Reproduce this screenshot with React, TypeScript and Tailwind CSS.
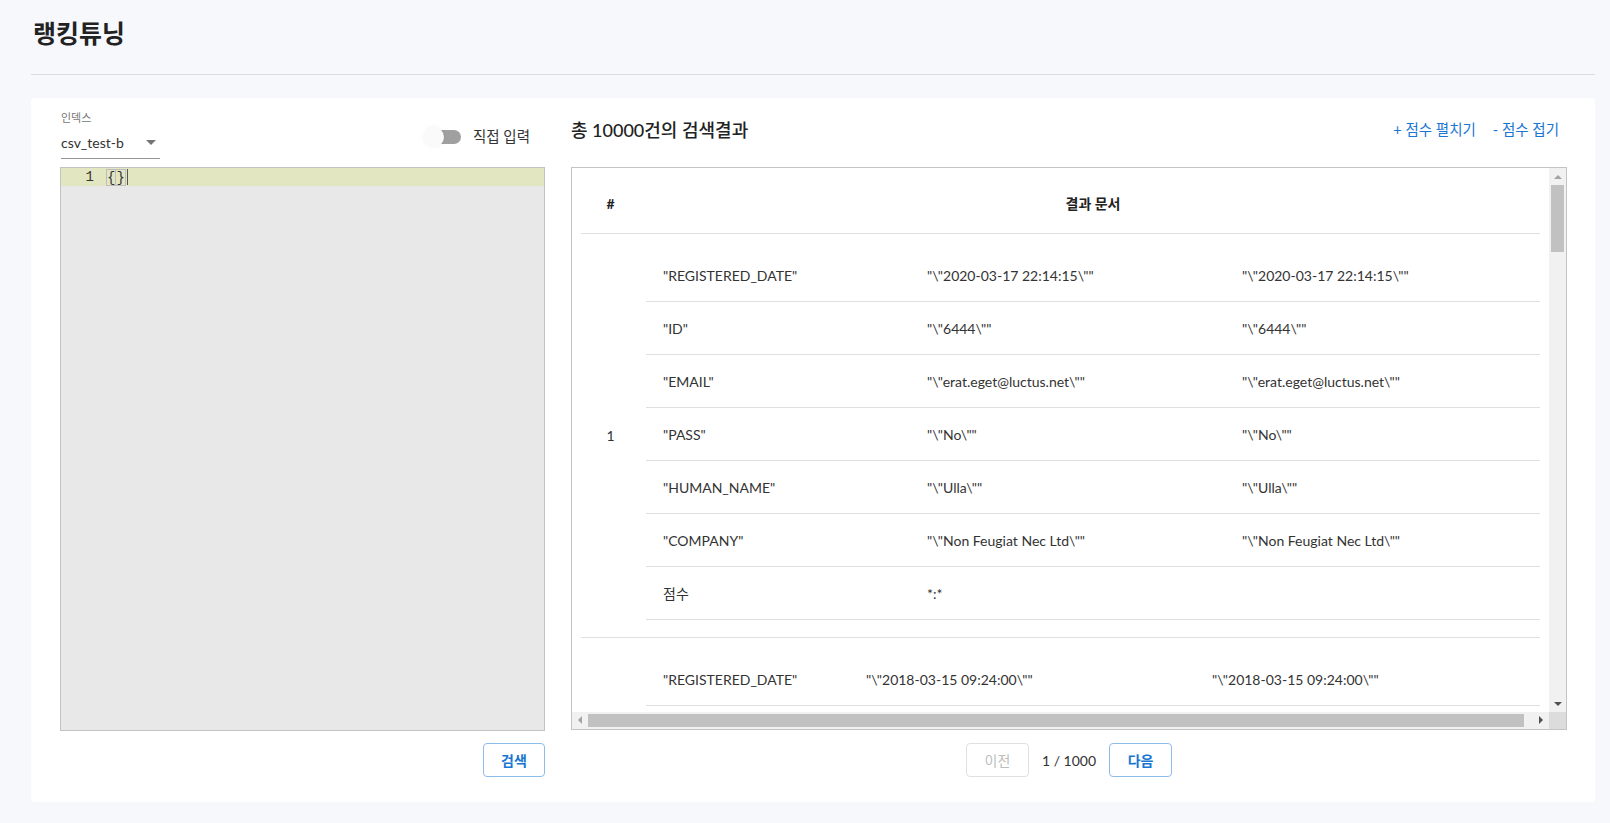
import React from 'react';

const FONT = { fontFamily: 'Lato, "Noto Sans CJK KR", sans-serif' };

type Row = [string, string, string];

const group1: Row[] = [
  ['"REGISTERED_DATE"', '"\\"2020-03-17 22:14:15\\""', '"\\"2020-03-17 22:14:15\\""'],
  ['"ID"', '"\\"6444\\""', '"\\"6444\\""'],
  ['"EMAIL"', '"\\"erat.eget@luctus.net\\""', '"\\"erat.eget@luctus.net\\""'],
  ['"PASS"', '"\\"No\\""', '"\\"No\\""'],
  ['"HUMAN_NAME"', '"\\"Ulla\\""', '"\\"Ulla\\""'],
  ['"COMPANY"', '"\\"Non Feugiat Nec Ltd\\""', '"\\"Non Feugiat Nec Ltd\\""'],
  ['점수', '*:*', ''],
];

// second hit, only its first row is in view
const group2: Row[] = [
  ['"REGISTERED_DATE"', '"\\"2018-03-15 09:24:00\\""', '"\\"2018-03-15 09:24:00\\""'],
];

function ResultGroup({ no, rows, cols }: { no: string; rows: Row[]; cols: [string, string, string] }) {
  return (
    <div className="flex border-b border-[#e0e0e0]">
      <div className="w-[65px] shrink-0 flex items-center justify-center pr-[6px] text-[14px] text-[#333]">{no}</div>
      <div className="flex-1 pt-[15px] pb-[17px]">
        {rows.map((r, i) => (
          <div key={i} className="flex h-[53px] items-center border-b border-[#e0e0e0] text-[14px] text-[#333]">
            <div className={`${cols[0]} pl-[17px] whitespace-nowrap`}>{r[0]}</div>
            <div className={`${cols[1]} pl-[17px] whitespace-nowrap`}>{r[1]}</div>
            <div className={`${cols[2]} pl-[17px] whitespace-nowrap`}>{r[2]}</div>
          </div>
        ))}
      </div>
    </div>
  );
}

function Tri({ dir, color }: { dir: 'up' | 'down' | 'left' | 'right'; color: string }) {
  const pts = {
    up: '0,7 4,3 8,7',
    down: '0,3 8,3 4,7',
    left: '6,0 6,8 2,4',
    right: '2,0 2,8 6,4',
  }[dir];
  return (
    <svg width="8" height="10" viewBox="0 0 8 10">
      <polygon points={pts} fill={color} />
    </svg>
  );
}

function PageButton({ label, disabled }: { label: string; disabled?: boolean }) {
  return (
    <button
      className={
        disabled
          ? 'h-[34px] w-[63px] rounded-[4px] border border-[#e0e0e0] text-[14px] text-[#bdbdbd]'
          : 'h-[34px] w-[63px] rounded-[4px] border border-[#8dbbea] text-[14px] font-bold text-[#1976d2]'
      }
    >
      {label}
    </button>
  );
}

export default function App() {
  return (
    <div className="min-h-screen bg-[#f7f8fc] pl-[31px] pr-[15px] pt-[19px] pb-[21px]" style={FONT}>
      <h1 className="h-[28px] leading-[28px] text-[25px] font-bold text-[#222] pl-[2px]">랭킹튜닝</h1>
      <div className="mt-[27px] border-t border-[#dcdde0]" />

      <div className="mt-[23px] h-[704px] rounded-[4px] bg-white pl-[29px] pr-[28px] pt-[12px] flex gap-[26px]">
        {/* left */}
        <div className="w-[485px] flex flex-col">
          <div className="flex items-start justify-between">
            <div className="pl-[1px]">
              <div className="h-[16px] leading-[16px] text-[11px] text-[#777]">인덱스</div>
              <div className="h-[33px] w-[99px] flex items-center justify-between border-b border-[#949494] pr-[4px]">
                <span className="text-[14px] text-[#333]">csv_test-b</span>
                <svg width="10" height="5" viewBox="0 0 10 5">
                  <polygon points="0,0 10,0 5,5" fill="#757575" />
                </svg>
              </div>
            </div>
            <div className="mt-[16px] flex items-center pr-[15px]">
              <div className="relative h-[20px] w-[37px] flex items-center">
                <div className="ml-[3px] h-[14px] w-[34px] rounded-full bg-[#a0a0a0]" />
                <div className="absolute left-0 top-0 h-[20px] w-[20px] rounded-full bg-[#fafafa] shadow-[0_0_4px_rgba(0,0,0,0.06)]" />
              </div>
              <span className="ml-[12px] text-[14.5px] text-[#333]">직접 입력</span>
            </div>
          </div>

          <div className="mt-[8px] h-[564px] border border-[#c2c2c2] bg-[#e8e8e8]" style={{ fontFamily: '"Liberation Mono", monospace' }}>
            <div className="flex h-[18px] bg-[#e2e6c1] text-[14px] leading-[18px] text-[#333]">
              <div className="w-[40px] text-right pr-[7px]">1</div>
              <div className="pl-[5px] flex items-center">
                <span className="h-[17px] leading-[16px] border border-[#bdbdbd]">{'{'}</span>
                <span className="h-[17px] leading-[16px] border border-[#bdbdbd] border-l-0">{'}'}</span>
                <span className="ml-[1px] h-[16px] w-[1px] bg-[#555]" />
              </div>
            </div>
          </div>

          <div className="mt-[12px] flex justify-end">
            <button className="h-[34px] w-[62px] rounded-[4px] border border-[#8dbbea] text-[14px] font-bold text-[#1976d2]">
              검색
            </button>
          </div>
        </div>

        {/* right */}
        <div className="flex-1 flex flex-col">
          <div className="h-[40px] flex items-center justify-between pr-[8px]">
            <span className="text-[18px] font-medium text-[#222]">총 10000건의 검색결과</span>
            <div className="flex gap-[17px] text-[14.5px] text-[#1976d2]">
              <span>+ 점수 펼치기</span>
              <span>- 점수 접기</span>
            </div>
          </div>

          <div className="mt-[17px] h-[563px] border border-[#c4c4c4] flex flex-col">
            <div className="flex h-[544px]">
              <div className="flex-1 overflow-hidden px-[9px]">
                <div className="pt-[6px]">
                  <div className="flex h-[60px] items-center border-b border-[#e0e0e0] text-[14px] font-bold text-[#222]">
                    <div className="w-[65px] text-center pr-[6px]">#</div>
                    <div className="flex-1 text-center">결과 문서</div>
                  </div>
                  <ResultGroup no="1" rows={group1} cols={['w-[264px]', 'w-[315px]', 'w-[315px]']} />
                  <ResultGroup no="" rows={group2} cols={['w-[203px]', 'w-[346px]', 'w-[345px]']} />
                </div>
              </div>
              <div className="w-[17px] bg-[#f1f1f1] flex flex-col">
                <div className="h-[17px] flex items-center justify-center">
                  <Tri dir="up" color="#a3a3a3" />
                </div>
                <div className="mx-[2px] h-[67px] bg-[#c1c1c1]" />
                <div className="flex-1" />
                <div className="h-[17px] flex items-center justify-center">
                  <Tri dir="down" color="#505050" />
                </div>
              </div>
            </div>
            <div className="flex h-[17px]">
              <div className="flex-1 bg-[#f1f1f1] flex items-center">
                <div className="w-[16px] flex items-center justify-center">
                  <Tri dir="left" color="#a3a3a3" />
                </div>
                <div className="h-[13px] w-[936px] bg-[#c1c1c1]" />
                <div className="flex-1" />
                <div className="w-[17px] flex items-center justify-center">
                  <Tri dir="right" color="#505050" />
                </div>
              </div>
              <div className="w-[17px] bg-[#dcdcdc]" />
            </div>
          </div>

          <div className="mt-[13px] flex items-center justify-center gap-[13px]">
            <PageButton label="이전" disabled />
            <span className="text-[14px] text-[#333]">1 / 1000</span>
            <PageButton label="다음" />
          </div>
        </div>
      </div>
    </div>
  );
}
